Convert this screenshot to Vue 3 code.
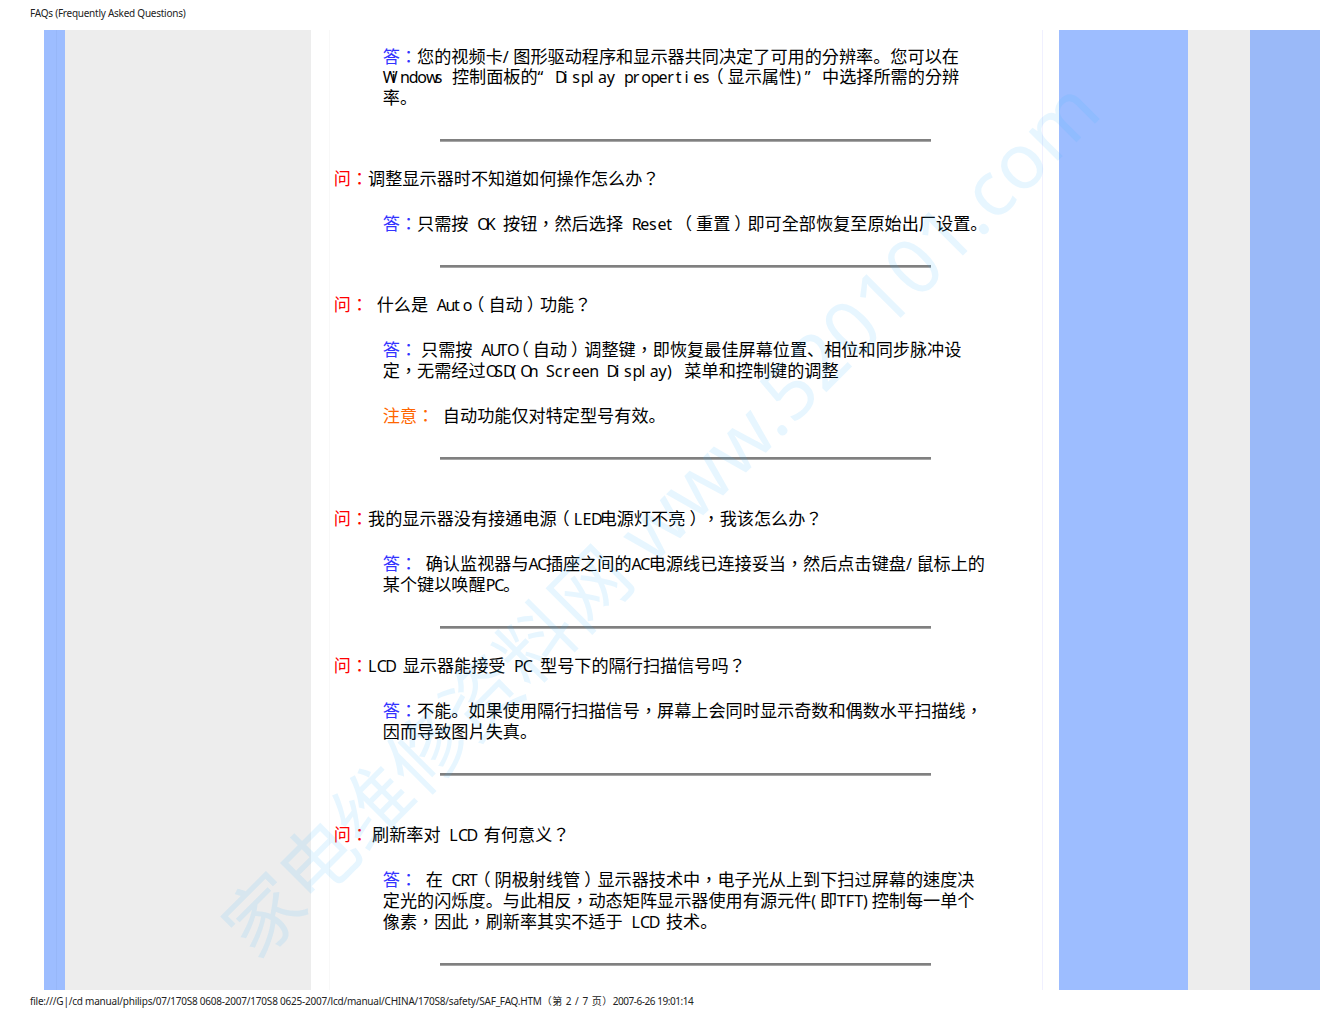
<template>
  <div class="page">
    <div class="top-line">FAQs (Frequently Asked Questions)</div>

    <div class="columns">
      <div class="side-a"></div>
      <div class="side-b"></div>
      <div class="side-grey"></div>

      <div class="content">
        <template v-for="(item, i) in items" :key="i">
          <p v-if="item.q" class="row q" :class="{ far: item.far }">
            <span class="red">{{ item.qLabel }}</span>
            <span v-for="(r, n) in runs(item.q)" :key="n" :class="r.cls">{{ r.t }}</span>
          </p>
          <p class="row a" :class="{ first: i === 0, loose: item.note }">
            <span
              v-for="(line, l) in item.a"
              :key="l"
              class="line"
            >
              <span v-if="l === 0" class="blue">{{ item.aLabel }}</span>
              <span v-for="(r, n) in runs(line)" :key="n" :class="r.cls">{{ r.t }}</span>
            </span>
          </p>
          <p v-if="item.note" class="row a note">
            <span class="orange">注意：</span>
            <span v-for="(r, n) in runs(item.note)" :key="n" :class="r.cls">{{ r.t }}</span>
          </p>
          <div class="rule"></div>
        </template>
      </div>

      <div class="gap"></div>
      <div class="right-a"></div>
      <div class="right-grey"></div>
      <div class="right-b"></div>
    </div>

    <div class="bottom-line">file:///G|/cd manual/philips/07/170S8 0608-2007/170S8 0625-2007/lcd/manual/CHINA/170S8/safety/SAF_FAQ.HTM<span class="foot-page">（第 2 / 7 页）</span><span class="foot-time">2007-6-26 19:01:14</span></div>

    <div class="watermark">家电维修资料网 www.520101.com</div>
  </div>
</template>

<script setup>
// the source PDF puts every latin char in a half-width cell, so split them out
function runs(text) {
  const out = [];
  for (const ch of text) {
    if (ch === "\u2005") out.push({ t: "", cls: "thin" });
    else if (ch === "/") out.push({ t: ch, cls: "cell slash" });
    else if (ch === "。" || ch === "、") out.push({ t: ch, cls: "sc" });
    else if (ch === "（") out.push({ t: ch, cls: "open" });
    else if (ch === "）") out.push({ t: ch, cls: "close" });
    else if (ch.charCodeAt(0) < 128 || ch === "“" || ch === "”") out.push({ t: ch, cls: "cell" });
    else if (out.length && out[out.length - 1].cls === "") out[out.length - 1].t += ch;
    else out.push({ t: ch, cls: "" });
  }
  return out;
}

const items = [
  {
    aLabel: "答：",
    a: [
      "您的视频卡/图形驱动程序和显示器共同决定了可用的分辨率。您可以在",
      "Windows 控制面板的“ Display properties（显示属性)” 中选择所需的分辨",
      "率。",
    ],
  },
  {
    qLabel: "问：",
    q: "调整显示器时不知道如何操作怎么办？",
    aLabel: "答：",
    a: ["只需按 OK 按钮，然后选择 Reset\u2005（重置）即可全部恢复至原始出厂设置。"],
  },
  {
    qLabel: "问：",
    q: " 什么是 Auto（自动）功能？",
    aLabel: "答：",
    a: [
      "\u2005只需按 AUTO（自动）调整键，即恢复最佳屏幕位置、相位和同步脉冲设",
      "定，无需经过OSD(On Screen Display) 菜单和控制键的调整",
    ],
    note: " 自动功能仅对特定型号有效。",
  },
  {
    far: true,
    qLabel: "问：",
    q: "我的显示器没有接通电源（LED电源灯不亮），我该怎么办？",
    aLabel: "答：",
    a: [
      " 确认监视器与AC插座之间的AC电源线已连接妥当，然后点击键盘/鼠标上的",
      "某个键以唤醒PC。",
    ],
  },
  {
    qLabel: "问：",
    q: "LCD 显示器能接受 PC 型号下的隔行扫描信号吗？",
    aLabel: "答：",
    a: [
      "不能。如果使用隔行扫描信号，屏幕上会同时显示奇数和偶数水平扫描线，",
      "因而导致图片失真。",
    ],
  },
  {
    far: true,
    qLabel: "问：",
    q: "\u2005刷新率对 LCD 有何意义？",
    aLabel: "答：",
    a: [
      " 在 CRT（阴极射线管）显示器技术中，电子光从上到下扫过屏幕的速度决",
      "定光的闪烁度。与此相反，动态矩阵显示器使用有源元件(即TFT)控制每一单个",
      "像素，因此，刷新率其实不适于 LCD 技术。",
    ],
  },
];
</script>

<style scoped>
.page {
  position: relative;
  width: 1320px;
  height: 1020px;
  overflow: hidden;
  background: #fff;
  font-family: "Noto Sans", "Noto Sans CJK TC", sans-serif;
  color: #000;
  text-spacing-trim: space-all;
}

.top-line {
  height: 30px;
  padding-left: 30px;
  box-sizing: border-box;
  font-size: 10px;
  line-height: 27px;
  letter-spacing: -0.25px;
  color: #222;
}

.columns {
  display: flex;
  height: 960px;
  margin-left: 44px;
}

.side-a {
  width: 12px;
  background: #9dbdff;
  border-right: 1px solid #97b7f8;
}

.side-b {
  width: 8px;
  background: #9dbdff;
}

.side-grey {
  width: 246px;
  background: #ededed;
}

.content {
  width: 713px;
  margin-left: 18px;
  border-left: 1px solid #f8f8f8;
  border-right: 1px solid #f0f0ff;
}

.row {
  margin: 0;
  font-size: 17.15px;
  line-height: 20.5px;
  white-space: nowrap;
}

.q {
  height: 20.5px;
  margin-top: 26.5px;
  padding-left: 4px;
}

.q.far {
  margin-top: 49.5px;
}

.a {
  margin-top: 24px;
  padding-left: 53px;
}

.a.first {
  margin-top: 16px;
}

.a.note {
  height: 20.5px;
  margin-top: 22.5px;
}

.line {
  display: block;
  height: 20.5px;
}

.loose .line {
  height: 21.5px;
}

.cell {
  display: inline-block;
  width: 8.65px;
  font-size: 16px;
  line-height: 1;
  white-space: pre;
}

.slash {
  width: 10.5px;
}

.thin {
  display: inline-block;
  width: 4px;
}

.sc {
  font-family: "Noto Sans CJK SC", sans-serif;
}

/* full-width brackets sit centred in their cell in the reference */
.open {
  margin-left: -4px;
  margin-right: 4px;
}

.close {
  margin-left: 4px;
  margin-right: -4px;
}

.red {
  color: #ff0000;
}

.blue {
  color: #3333ff;
}

.orange {
  color: #ff6600;
}

.rule {
  width: 491px;
  height: 2px;
  margin: 31.5px 0 0 110px;
  background: #808080;
  border-bottom: 1px solid #a6a6a6;
}

.gap {
  width: 16px;
}

.right-a {
  width: 129px;
  background: #9dbdff;
}

.right-grey {
  width: 62px;
  background: #ededed;
}

.right-b {
  width: 70px;
  background: #9ab9f8;
}

.bottom-line {
  height: 30px;
  padding-left: 30px;
  box-sizing: border-box;
  font-size: 10px;
  line-height: 22px;
  letter-spacing: -0.22px;
  color: #222;
  white-space: nowrap;
}

.foot-page {
  letter-spacing: 0.5px;
}

.foot-time {
  letter-spacing: -0.45px;
}

.watermark {
  position: absolute;
  left: 657px;
  top: 515px;
  transform: translate(-50%, -50%) rotate(-45deg);
  font-size: 77px;
  white-space: nowrap;
  color: rgba(60, 185, 255, 0.12);
  pointer-events: none;
}
</style>
